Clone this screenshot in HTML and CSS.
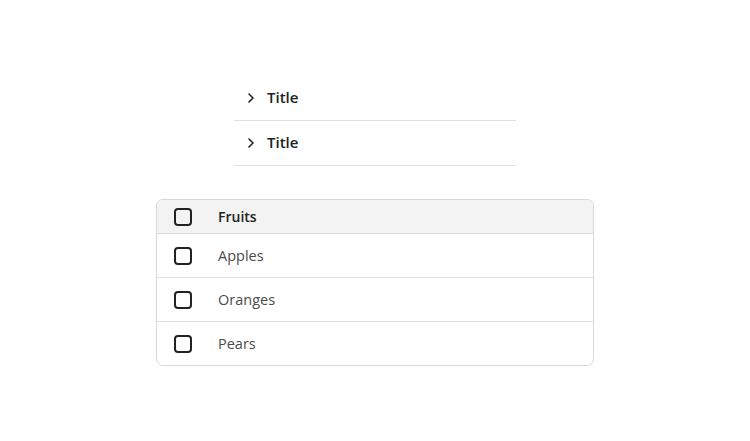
FILE: index.html
```html
<!DOCTYPE html>
<html lang="en">
<head>
  <meta charset="UTF-8">
  <meta name="viewport" content="width=device-width, initial-scale=1.0">
  <title>Accordion and table</title>
  <link rel="stylesheet" href="styles.css">
</head>
<body>
  <div class="page">
    <div class="accordion">
      <div class="accordion-item">
        <svg class="chevron" width="10" height="10" viewBox="0 0 10 10"><path d="M3 1 L7 5 L3 9" fill="none" stroke="#222" stroke-width="1.6" stroke-linecap="round" stroke-linejoin="round"/></svg>
        <span class="accordion-title">Title</span>
      </div>
      <div class="accordion-item">
        <svg class="chevron" width="10" height="10" viewBox="0 0 10 10"><path d="M3 1 L7 5 L3 9" fill="none" stroke="#222" stroke-width="1.6" stroke-linecap="round" stroke-linejoin="round"/></svg>
        <span class="accordion-title">Title</span>
      </div>
    </div>

    <div class="table">
      <div class="row header-row">
        <span class="checkbox"></span>
        <span class="cell">Fruits</span>
      </div>
      <div class="row">
        <span class="checkbox"></span>
        <span class="cell">Apples</span>
      </div>
      <div class="row">
        <span class="checkbox"></span>
        <span class="cell">Oranges</span>
      </div>
      <div class="row last">
        <span class="checkbox"></span>
        <span class="cell">Pears</span>
      </div>
    </div>
  </div>
</body>
</html>
```

FILE: styles.css
```css
* {
  box-sizing: border-box;
}
body {
  margin: 0;
  background: #fff;
  font-family: 'Open Sans', 'Noto Sans', sans-serif;
  color: #222;
}
.page {
  display: flex;
  flex-direction: column;
  align-items: center;
  padding-top: 76px;
}
.accordion {
  width: 282px;
  margin-bottom: 33px;
}
.accordion-item {
  height: 45px;
  display: flex;
  align-items: center;
  padding-left: 12px;
  padding-bottom: 3px;
  border-bottom: 1px solid #e1e1e1;
}
.chevron {
  margin-right: 11px;
  margin-top: 3px;
}
.accordion-title {
  font-size: 15px;
  font-weight: 600;
  color: #222;
}
.table {
  width: 438px;
  border: 1px solid #d8d8d8;
  border-radius: 7px;
  overflow: hidden;
}
.row {
  height: 44px;
  display: flex;
  align-items: center;
  padding-left: 17px;
  border-bottom: 1px solid #e1e1e1;
}
.row.last {
  border-bottom: none;
  height: 43px;
}
.header-row {
  height: 34px;
  background: #f3f3f3;
  border-bottom-color: #dcdcdc;
}
.checkbox {
  width: 18px;
  height: 18px;
  border: 2px solid #222;
  border-radius: 4px;
  margin-right: 26px;
}
.cell {
  font-size: 14.5px;
  color: #4b4b4b;
}
.header-row .cell {
  font-weight: 600;
  font-size: 14px;
  color: #222;
}
```
